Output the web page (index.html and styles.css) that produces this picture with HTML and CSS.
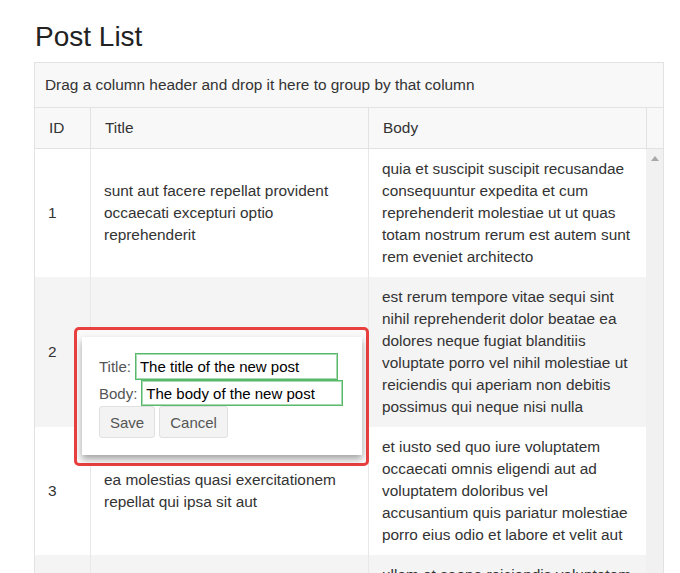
FILE: index.html
```html
<!DOCTYPE html>
<html>
<head>
<meta charset="utf-8">
<link rel="stylesheet" href="styles.css">
</head>
<body>
<div class="page">
  <h1 class="page-title">Post List</h1>
  <div class="grid">
    <div class="group-panel">Drag a column header and drop it here to group by that column</div>
    <div class="grid-header">
      <div class="hcell c-id">ID</div>
      <div class="hcell c-title">Title</div>
      <div class="hcell c-body">Body</div>
      <div class="hcell c-gutter"></div>
    </div>
    <div class="grid-content">
      <div class="rows">
        <div class="row">
          <div class="cell c-id">1</div>
          <div class="cell c-title">sunt aut facere repellat provident occaecati excepturi optio reprehenderit</div>
          <div class="cell c-body">quia et suscipit suscipit recusandae consequuntur expedita et cum reprehenderit molestiae ut ut quas totam nostrum rerum est autem sunt rem eveniet architecto</div>
        </div>
        <div class="row alt">
          <div class="cell c-id">2</div>
          <div class="cell c-title">qui est esse</div>
          <div class="cell c-body">est rerum tempore vitae sequi sint nihil reprehenderit dolor beatae ea dolores neque fugiat blanditiis voluptate porro vel nihil molestiae ut reiciendis qui aperiam non debitis possimus qui neque nisi nulla</div>
        </div>
        <div class="row">
          <div class="cell c-id">3</div>
          <div class="cell c-title">ea molestias quasi exercitationem repellat qui ipsa sit aut</div>
          <div class="cell c-body">et iusto sed quo iure voluptatem occaecati omnis eligendi aut ad voluptatem doloribus vel accusantium quis pariatur molestiae porro eius odio et labore et velit aut</div>
        </div>
        <div class="row alt">
          <div class="cell c-id">4</div>
          <div class="cell c-title">eum et est occaecati</div>
          <div class="cell c-body">ullam et saepe reiciendis voluptatem adipisci sit amet autem assumenda provident rerum culpa quis hic commodi nesciunt rem tenetur doloremque ipsam iure</div>
        </div>
      </div>
      <div class="scrollbar">
        <svg class="arrow" width="8" height="5" viewBox="0 0 8 5"><path d="M0 5 L4 0 L8 5 Z" fill="#a8a8a8"/></svg>
      </div>
    </div>
  </div>

  <div class="highlight"></div>
  <div class="popup">
    <div class="field"><label>Title:</label><input class="inp inp-title" value="The title of the new post"></div>
    <div class="field"><label>Body:</label><input class="inp inp-body" value="The body of the new post"></div>
    <div class="actions"><button class="btn">Save</button><button class="btn">Cancel</button></div>
  </div>
</div>
</body>
</html>
```

FILE: styles.css
```css
html, body {
  margin: 0;
  padding: 0;
  background: #fff;
  overflow: hidden;
  font-family: "Liberation Sans", Arial, sans-serif;
  color: #333;
}
.page {
  position: relative;
  padding: 20px 17px 0 34px;
}
.page-title {
  margin: 0 0 8px 1px;
  font-size: 28px;
  line-height: 34px;
  font-weight: normal;
  color: #222;
}
.grid {
  width: 628px;
  border: 1px solid #e2e2e2;
  border-bottom: none;
  font-size: 15.4px;
}
.group-panel {
  background: #f8f8f8;
  padding: 11px 10px 12px;
  line-height: 21px;
  color: #333;
  border-bottom: 1px solid #e2e2e2;
}
.grid-header {
  display: flex;
  background: #f8f8f8;
  border-bottom: 1px solid #e2e2e2;
}
.hcell {
  padding: 10px 14px;
  line-height: 20px;
  color: #333;
  box-sizing: border-box;
}
.c-id { width: 55px; flex: none; }
.c-title { width: 278px; flex: none; border-left: 1px solid #e2e2e2; }
.c-body { width: 278px; flex: none; border-left: 1px solid #e2e2e2; }
.c-gutter { width: 17px; flex: none; border-left: 1px solid #e2e2e2; padding: 0; }
.grid-content {
  display: flex;
}
.rows {
  width: 611px;
  flex: none;
}
.row {
  display: flex;
  align-items: stretch;
}
.row.alt { background: #f4f4f4; }
.cell {
  display: flex;
  align-items: center;
  padding: 9px 13px;
  line-height: 22px;
  box-sizing: border-box;
  color: #333;
}
.row .c-title, .row .c-body { border-left-color: #e8e8e8; }
.scrollbar {
  width: 17px;
  flex: none;
  background: #f1f1f1;
  display: flex;
  justify-content: center;
  align-items: flex-start;
  padding-top: 7px;
  box-sizing: border-box;
}
.arrow { display: block; }

.highlight {
  position: absolute;
  left: 74px;
  top: 327px;
  width: 289px;
  height: 133px;
  border: 3px solid #e8403f;
  border-radius: 5px;
  background: #f9f9f9;
}
.popup {
  position: absolute;
  left: 82px;
  top: 337px;
  width: 280px;
  height: 118px;
  box-sizing: border-box;
  background: #fff;
  box-shadow: 0 4px 7px rgba(0, 0, 0, 0.35);
  padding: 16px 17px;
  font-size: 15px;
}
.field {
  display: flex;
  align-items: center;
  height: 26px;
}
.field:first-child { height: 27px; }
.field label {
  color: #555;
  margin-right: 4px;
}
.inp {
  font-family: "Liberation Sans", Arial, sans-serif;
  font-size: 15px;
  color: #000;
  border: 1px solid #58b86c;
  box-shadow: inset 0 0 0 1px #a7dcb2;
  padding: 0 4px;
  height: 26px;
  box-sizing: border-box;
  margin: 0;
  outline: none;
}
.inp-title { width: 203px; height: 27px; }
.inp-body { width: 202px; }
.actions {
  display: flex;
  gap: 4px;
}
.btn {
  font-family: "Liberation Sans", Arial, sans-serif;
  font-size: 15px;
  color: #555;
  background: #f3f3f3;
  border: 1px solid #e0e0e0;
  border-radius: 3px;
  height: 32px;
  padding: 0 10px;
  margin: 0;
}
```
